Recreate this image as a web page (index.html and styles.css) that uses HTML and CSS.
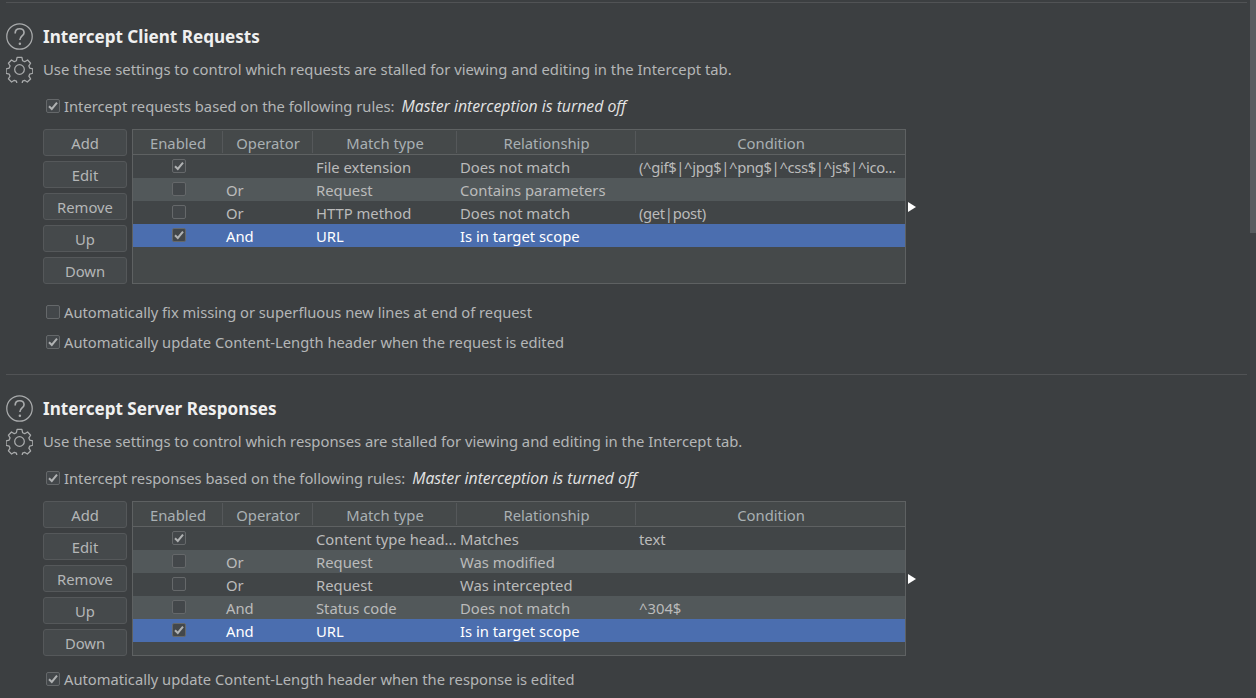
FILE: index.html
```html
<!DOCTYPE html>
<html lang="en">
<head>
<meta charset="utf-8">
<title>Intercept settings</title>
<link rel="stylesheet" href="styles.css">
</head>
<body>
<svg class="defs" width="0" height="0" aria-hidden="true">
  <symbol id="tick" viewBox="0 0 14 14"><path d="M3 7.200 5.800 10 11 3.600" fill="none" stroke="currentColor" stroke-width="2"/></symbol>
  <symbol id="help" viewBox="0 0 28 28"><circle cx="14" cy="14" r="13.200" fill="none" stroke="currentColor" stroke-width="1.300"/><path d="M9.500 10.800c0-3 2-4.800 4.700-4.800s4.500 1.700 4.500 4c0 3.500-4.300 3.500-4.300 7.500" fill="none" stroke="currentColor" stroke-width="1.700"/><circle cx="14.400" cy="21.500" r="1.300" fill="currentColor"/></symbol>
  <symbol id="gear" viewBox="0 0 28 28"><path d="M11.500 1.500h5l.7 3.400 2.200 1 3-1.800 3.100 3.400-1.800 2.800.9 2.200 3.200.8v4.600l-3.200.8-.9 2.200 1.800 2.900-3.400 3.200-2.800-1.800-2.100.9-.7 3.300h-5l-.7-3.300-2.200-.9-2.800 1.800-3.300-3.300 1.700-2.800-.9-2.200-3.200-.8v-4.600l3.200-.8.900-2.200-1.700-2.800 3.200-3.400 2.900 1.800 2.200-1z" fill="none" stroke="currentColor" stroke-width="1.300" stroke-linejoin="round"/><circle cx="14" cy="14" r="5" fill="none" stroke="currentColor" stroke-width="1.300"/></symbol>
</svg>
<main class="page">
  <section class="section first">
    <div class="head-row">
      <svg class="icon"><use href="#help"/></svg>
      <h2>Intercept Client Requests</h2>
    </div>
    <div class="desc-row">
      <svg class="icon"><use href="#gear"/></svg>
      <p>Use these settings to control which requests are stalled for viewing and editing in the Intercept tab.</p>
    </div>
    <label class="check-line rule-line"><span class="box on"><svg><use href="#tick"/></svg></span>Intercept requests based on the following rules:<em>Master interception is turned off</em></label>
    <div class="editor">
      <div class="buttons"><button>Add</button><button>Edit</button><button>Remove</button><button>Up</button><button>Down</button></div>
      <div class="table">
        <div class="row header"><span class="c1">Enabled</span><span class="c2">Operator</span><span class="c3">Match type</span><span class="c4">Relationship</span><span class="c5">Condition</span></div>
        <div class="row"><span class="c1"><span class="box on"><svg><use href="#tick"/></svg></span></span><span class="c2"></span><span class="c3">File extension</span><span class="c4">Does not match</span><span class="c5 clip">(^gif$|^jpg$|^png$|^css$|^js$|^ico...</span></div>
        <div class="row alt"><span class="c1"><span class="box"></span></span><span class="c2">Or</span><span class="c3">Request</span><span class="c4">Contains parameters</span><span class="c5"></span></div>
        <div class="row"><span class="c1"><span class="box"></span></span><span class="c2">Or</span><span class="c3">HTTP method</span><span class="c4">Does not match</span><span class="c5 clip">(get|post)</span></div>
        <div class="row selected"><span class="c1"><span class="box on"><svg><use href="#tick"/></svg></span></span><span class="c2">And</span><span class="c3">URL</span><span class="c4">Is in target scope</span><span class="c5"></span></div>
      </div>
      <span class="marker"></span>
    </div>
    <label class="check-line after-table"><span class="box"></span>Automatically fix missing or superfluous new lines at end of request</label>
    <label class="check-line second"><span class="box on"><svg><use href="#tick"/></svg></span>Automatically update Content-Length header when the request is edited</label>
  </section>
  <section class="section">
    <div class="head-row">
      <svg class="icon"><use href="#help"/></svg>
      <h2>Intercept Server Responses</h2>
    </div>
    <div class="desc-row">
      <svg class="icon"><use href="#gear"/></svg>
      <p>Use these settings to control which responses are stalled for viewing and editing in the Intercept tab.</p>
    </div>
    <label class="check-line rule-line"><span class="box on"><svg><use href="#tick"/></svg></span>Intercept responses based on the following rules:<em>Master interception is turned off</em></label>
    <div class="editor">
      <div class="buttons"><button>Add</button><button>Edit</button><button>Remove</button><button>Up</button><button>Down</button></div>
      <div class="table">
        <div class="row header"><span class="c1">Enabled</span><span class="c2">Operator</span><span class="c3">Match type</span><span class="c4">Relationship</span><span class="c5">Condition</span></div>
        <div class="row"><span class="c1"><span class="box on"><svg><use href="#tick"/></svg></span></span><span class="c2"></span><span class="c3">Content type head...</span><span class="c4">Matches</span><span class="c5">text</span></div>
        <div class="row alt"><span class="c1"><span class="box"></span></span><span class="c2">Or</span><span class="c3">Request</span><span class="c4">Was modified</span><span class="c5"></span></div>
        <div class="row"><span class="c1"><span class="box"></span></span><span class="c2">Or</span><span class="c3">Request</span><span class="c4">Was intercepted</span><span class="c5"></span></div>
        <div class="row alt"><span class="c1"><span class="box"></span></span><span class="c2">And</span><span class="c3">Status code</span><span class="c4">Does not match</span><span class="c5">^304$</span></div>
        <div class="row selected"><span class="c1"><span class="box on"><svg><use href="#tick"/></svg></span></span><span class="c2">And</span><span class="c3">URL</span><span class="c4">Is in target scope</span><span class="c5"></span></div>
      </div>
      <span class="marker"></span>
    </div>
    <label class="check-line after-table short"><span class="box on"><svg><use href="#tick"/></svg></span>Automatically update Content-Length header when the response is edited</label>
  </section>
</main>
<div class="scrollbar"><div class="thumb"></div></div>
</body>
</html>
```

FILE: styles.css
```css
* { box-sizing: border-box; }
html, body { margin: 0; height: 698px; overflow: hidden; }
body {
  background: #3c3f41;
  color: #bbbbbb;
  font-family: "Noto Sans", "Open Sans", sans-serif;
  font-size: 14.800px;
  display: flex;
}
.defs { position: absolute; }
.page { width: 1250px; padding: 2px 3px 0 6px; flex: none; }
.scrollbar { width: 6px; height: 698px; background: #3f4244; }
.thumb { height: 233px; background: #595d5f; }
.section { border-top: 1px solid #515355; }
.section.first { height: 372px; }
.head-row, .desc-row { display: flex; align-items: center; gap: 10px; }
.head-row { height: 28px; margin-top: 19px; }
.desc-row { height: 28px; margin-top: 5px; }
.icon { width: 27px; height: 27px; color: #a9abac; flex: none; }
h2 { margin: 0; font-size: 17.100px; font-weight: 700; color: #f0f0f0; }
p { margin: 0; color: #b4b6b7; }
.check-line { display: flex; align-items: center; height: 20px; padding-left: 40px; color: #b4b6b7; white-space: nowrap; font-size: 14.730px; }
.check-line > .box { margin-right: 4px; }
.rule-line { margin-top: 13px; }
.rule-line em { margin-left: 7px; color: #e4e4e4; font-family: "Open Sans", sans-serif; font-style: italic; font-size: 15.800px; }
.after-table { margin-top: 18px; }
.after-table.short { margin-top: 13px; }
.second { margin-top: 10px; }
.box {
  width: 14px; height: 14px; display: inline-block; flex: none;
  border: 1px solid #65686a; border-radius: 2px; background: #43474a; position: relative;
  color: #b0b2b3;
}
.box svg { position: absolute; left: -1px; top: -1px; width: 14px; height: 14px; }
.editor { display: flex; margin-top: 13px; padding-left: 37px; align-items: center; }
.buttons { display: flex; flex-direction: column; gap: 5px; width: 84px; margin-right: 5px; align-self: flex-start; }
button {
  height: 27px; padding: 0; border: 1px solid #55585a; border-radius: 3px;
  background: #45494b; color: #b4b6b7; font: inherit;
}
.table { width: 774px; height: 155px; border: 1px solid #5e6162; background: #45494a; flex: none; }
.row { display: flex; height: 23px; align-items: flex-start; background: #414547; }
.row > span { display: block; line-height: 25px; height: 23px; padding-left: 3px; white-space: nowrap; overflow: hidden; }
.row.alt { background: #52585a; }
.row.selected { background: #4b6eaf; color: #ffffff; }
.row.header { height: 25px; padding-top: 1px; background: #45494a; border-bottom: 1px solid #5e6162; color: #a9b0b3; }
.row.header > span { height: 22px; line-height: 25px; padding: 0 0 0 1px; text-align: center; border-right: 1px solid #55585a; }
.row.header > .c5 { border-right: 0; }
.c1 { width: 90px; flex: none; }
.c2 { width: 90px; flex: none; }
.c3 { width: 144px; flex: none; }
.c4 { width: 179px; flex: none; }
.c5 { flex: 1; min-width: 0; }
.row > .clip { letter-spacing: -0.350px; }
.row > .c1 { text-align: center; padding: 0 0 0 2px; }
.row > .c1 .box { margin-top: 4px; vertical-align: top; }
.marker { width: 0; height: 0; margin-left: 2px; border-left: 8px solid #ffffff; border-top: 5px solid transparent; border-bottom: 5px solid transparent; }
```
